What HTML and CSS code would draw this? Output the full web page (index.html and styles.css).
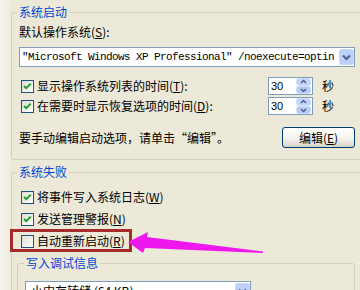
FILE: index.html
```html
<!DOCTYPE html>
<html lang="zh-CN">
    <head>
        <meta charset="utf-8">
        <title>启动和故障恢复</title>
        <link rel="stylesheet" href="styles.css">
    </head>
    <body>
        <div class="page">
            <fieldset class="group">
                <legend>系统启动</legend>
                <div class="caption">默认操作系统(<u>S</u>):</div>
                <div class="combo wide">
                    <span class="combo-text mono">"Microsoft Windows XP Professional" /noexecute=optin</span>
                    <span class="drop">
                        <svg width="15" height="16" viewBox="0 0 15 16"><rect x="0.5" y="0.5" width="14" height="15" rx="2" fill="#bdd0fa" stroke="#c9d8fb"/><path d="M4 6.5 L7.5 10 L11 6.5" fill="none" stroke="#4d6185" stroke-width="2"/></svg>
                    </span>
                </div>
                <div class="opt-row first">
                    <label class="check"><span class="box on"><svg width="11" height="11" viewBox="0 0 11 11"><path d="M2 5 L4.2 7.2 L8.8 2.6" fill="none" stroke="#21a121" stroke-width="2"/></svg></span>显示操作系统列表的时间(<u>T</u>):</label>
                    <div class="spin">
                        <span class="spin-val">30</span>
                        <span class="spin-btn">
                            <svg width="15" height="16" viewBox="0 0 15 16"><rect x="0.5" y="0.5" width="14" height="7" rx="2" fill="#c3d4fb" stroke="#d0ddfb"/><rect x="0.5" y="8.5" width="14" height="7" rx="2" fill="#b6cbf7" stroke="#d0ddfb"/><path d="M5 5 L7.5 2.5 L10 5" fill="none" stroke="#4d6185" stroke-width="1.5"/><path d="M5 11 L7.5 13.5 L10 11" fill="none" stroke="#4d6185" stroke-width="1.5"/></svg>
                        </span>
                    </div>
                    <span class="unit">秒</span>
                </div>
                <div class="opt-row">
                    <label class="check"><span class="box on"><svg width="11" height="11" viewBox="0 0 11 11"><path d="M2 5 L4.2 7.2 L8.8 2.6" fill="none" stroke="#21a121" stroke-width="2"/></svg></span>在需要时显示恢复选项的时间(<u>D</u>):</label>
                    <div class="spin">
                        <span class="spin-val">30</span>
                        <span class="spin-btn">
                            <svg width="15" height="16" viewBox="0 0 15 16"><rect x="0.5" y="0.5" width="14" height="7" rx="2" fill="#c3d4fb" stroke="#d0ddfb"/><rect x="0.5" y="8.5" width="14" height="7" rx="2" fill="#b6cbf7" stroke="#d0ddfb"/><path d="M5 5 L7.5 2.5 L10 5" fill="none" stroke="#4d6185" stroke-width="1.5"/><path d="M5 11 L7.5 13.5 L10 11" fill="none" stroke="#4d6185" stroke-width="1.5"/></svg>
                        </span>
                    </div>
                    <span class="unit">秒</span>
                </div>
                <div class="edit-row">
                    <span class="hint">要手动编辑启动选项，请单击“编辑”。</span>
                    <button class="btn">编辑(<u>E</u>)</button>
                </div>
            </fieldset>

            <fieldset class="group fail">
                <legend>系统失败</legend>
                <label class="check line first"><span class="box on"><svg width="11" height="11" viewBox="0 0 11 11"><path d="M2 5 L4.2 7.2 L8.8 2.6" fill="none" stroke="#21a121" stroke-width="2"/></svg></span>将事件写入系统日志(<u>W</u>)</label>
                <label class="check line"><span class="box on"><svg width="11" height="11" viewBox="0 0 11 11"><path d="M2 5 L4.2 7.2 L8.8 2.6" fill="none" stroke="#21a121" stroke-width="2"/></svg></span>发送管理警报(<u>N</u>)</label>
                <label class="check line marked"><span class="box"></span>自动重新启动(<u>R</u>)</label>

                <fieldset class="group debug">
                    <legend>写入调试信息</legend>
                    <div class="combo small">
                        <span class="combo-text">小内存转储 (64 KB)</span>
                        <span class="drop">
                            <svg width="15" height="16" viewBox="0 0 15 16"><rect x="0.5" y="0.5" width="14" height="15" rx="2" fill="#bdd0fa" stroke="#c9d8fb"/><path d="M4 6.5 L7.5 10 L11 6.5" fill="none" stroke="#4d6185" stroke-width="2"/></svg>
                        </span>
                    </div>
                </fieldset>
            </fieldset>

            <!-- 标注箭头，盖在内容上面 -->
            <svg class="arrow" width="360" height="290" viewBox="0 0 360 290">
                <polygon points="128,242 148,232 147,237 263,251.5 263,253 145,248 143,253" fill="#ee17ee"/>
            </svg>
        </div>
    </body>
</html>
```

FILE: styles.css
```css
body{
    margin: 0;
    width: 360px;
    height: 290px;
    overflow: hidden;
    background: linear-gradient(to right, #f4f2ea 0, #f0eee3 10px, #ece9d8 11px);
    font: 12px/14px "Noto Sans CJK SC", sans-serif;
    color: #000;
}
u{
    text-decoration: underline;
}
.page{
    position: relative;
    height: 290px;
    padding-top: 5px;
    box-sizing: border-box;
    overflow: hidden;
}

/* 分组框 */
.group{
    margin: 0 -12px 0 11px;
    padding: 0 16px 11px 7px;
    border: 1px solid #d0d0bf;
    border-radius: 3px;
    min-width: 0;
}
.group legend{
    padding: 0 2px;
    margin-left: -2px;
    color: #0046d5;
    line-height: 14px;
}
.fail{
    margin-top: 5px;
}
.debug{
    margin: 4px 0 0 -2px;
    padding: 0 0 20px 7px;
}
.debug legend{
    margin-left: -1px;
}

.caption{
    margin-top: 6px;
}

/* 下拉框 */
.combo{
    display: flex;
    align-items: center;
    height: 20px;
    margin-top: 8px;
    border: 1px solid #7f9db9;
    background: #fff;
    box-sizing: border-box;
}
.combo-text{
    flex: 1;
    padding-left: 2px;
    white-space: nowrap;
    overflow: hidden;
}
.mono{
    font: 11px/14px "Liberation Mono", monospace;
    letter-spacing: -0.6px;
}
.drop{
    display: flex;
    width: 15px;
    height: 16px;
}
.small{
    width: 226px;
    margin-top: 11px;
}
.small .combo-text{
    padding-left: 5px;
}

/* 复选框 */
.check{
    display: flex;
    align-items: center;
    white-space: nowrap;
}
.box{
    display: flex;
    align-items: center;
    justify-content: center;
    width: 13px;
    height: 13px;
    margin: 0 3px 0 2px;
    border: 1px solid #1c5180;
    box-sizing: border-box;
    background: linear-gradient(135deg, #dcdcd7, #fff);
}
.line{
    height: 22px;
}
.line.first{
    margin-top: 7px;
}
.marked{
    position: relative;
}
.marked:after{
    content: '';
    position: absolute;
    left: -9px;
    top: -1px;
    width: 122px;
    height: 23px;
    border: 3px solid #a62c2b;
    box-sizing: border-box;
}

/* 时间行 */
.opt-row{
    display: flex;
    align-items: center;
    height: 18px;
    margin-top: 2px;
}
.opt-row.first{
    margin-top: 10px;
}
.opt-row .check{
    flex: 1;
}
.spin{
    display: flex;
    align-items: center;
    width: 45px;
    height: 18px;
    border: 1px solid #7f9db9;
    background: #fff;
    box-sizing: border-box;
}
.spin-val{
    flex: 1;
    padding-left: 2px;
    font: 11px "Liberation Sans", sans-serif;
}
.spin-btn{
    display: flex;
    margin-right: 1px;
}
.unit{
    width: 42px;
    padding-left: 9px;
    box-sizing: border-box;
}

.edit-row{
    display: flex;
    align-items: center;
    margin-top: 12px;
}
.hint{
    flex: 1;
}
.btn{
    width: 73px;
    height: 21px;
    padding: 0;
    border: 1px solid #003c74;
    border-radius: 3px;
    background: linear-gradient(#fff, #f3f3ef 55%, #d8d3c8);
    font: inherit;
    color: #000;
}

.arrow{
    position: absolute;
    top: 0;
    left: 0;
    pointer-events: none;
}
```
